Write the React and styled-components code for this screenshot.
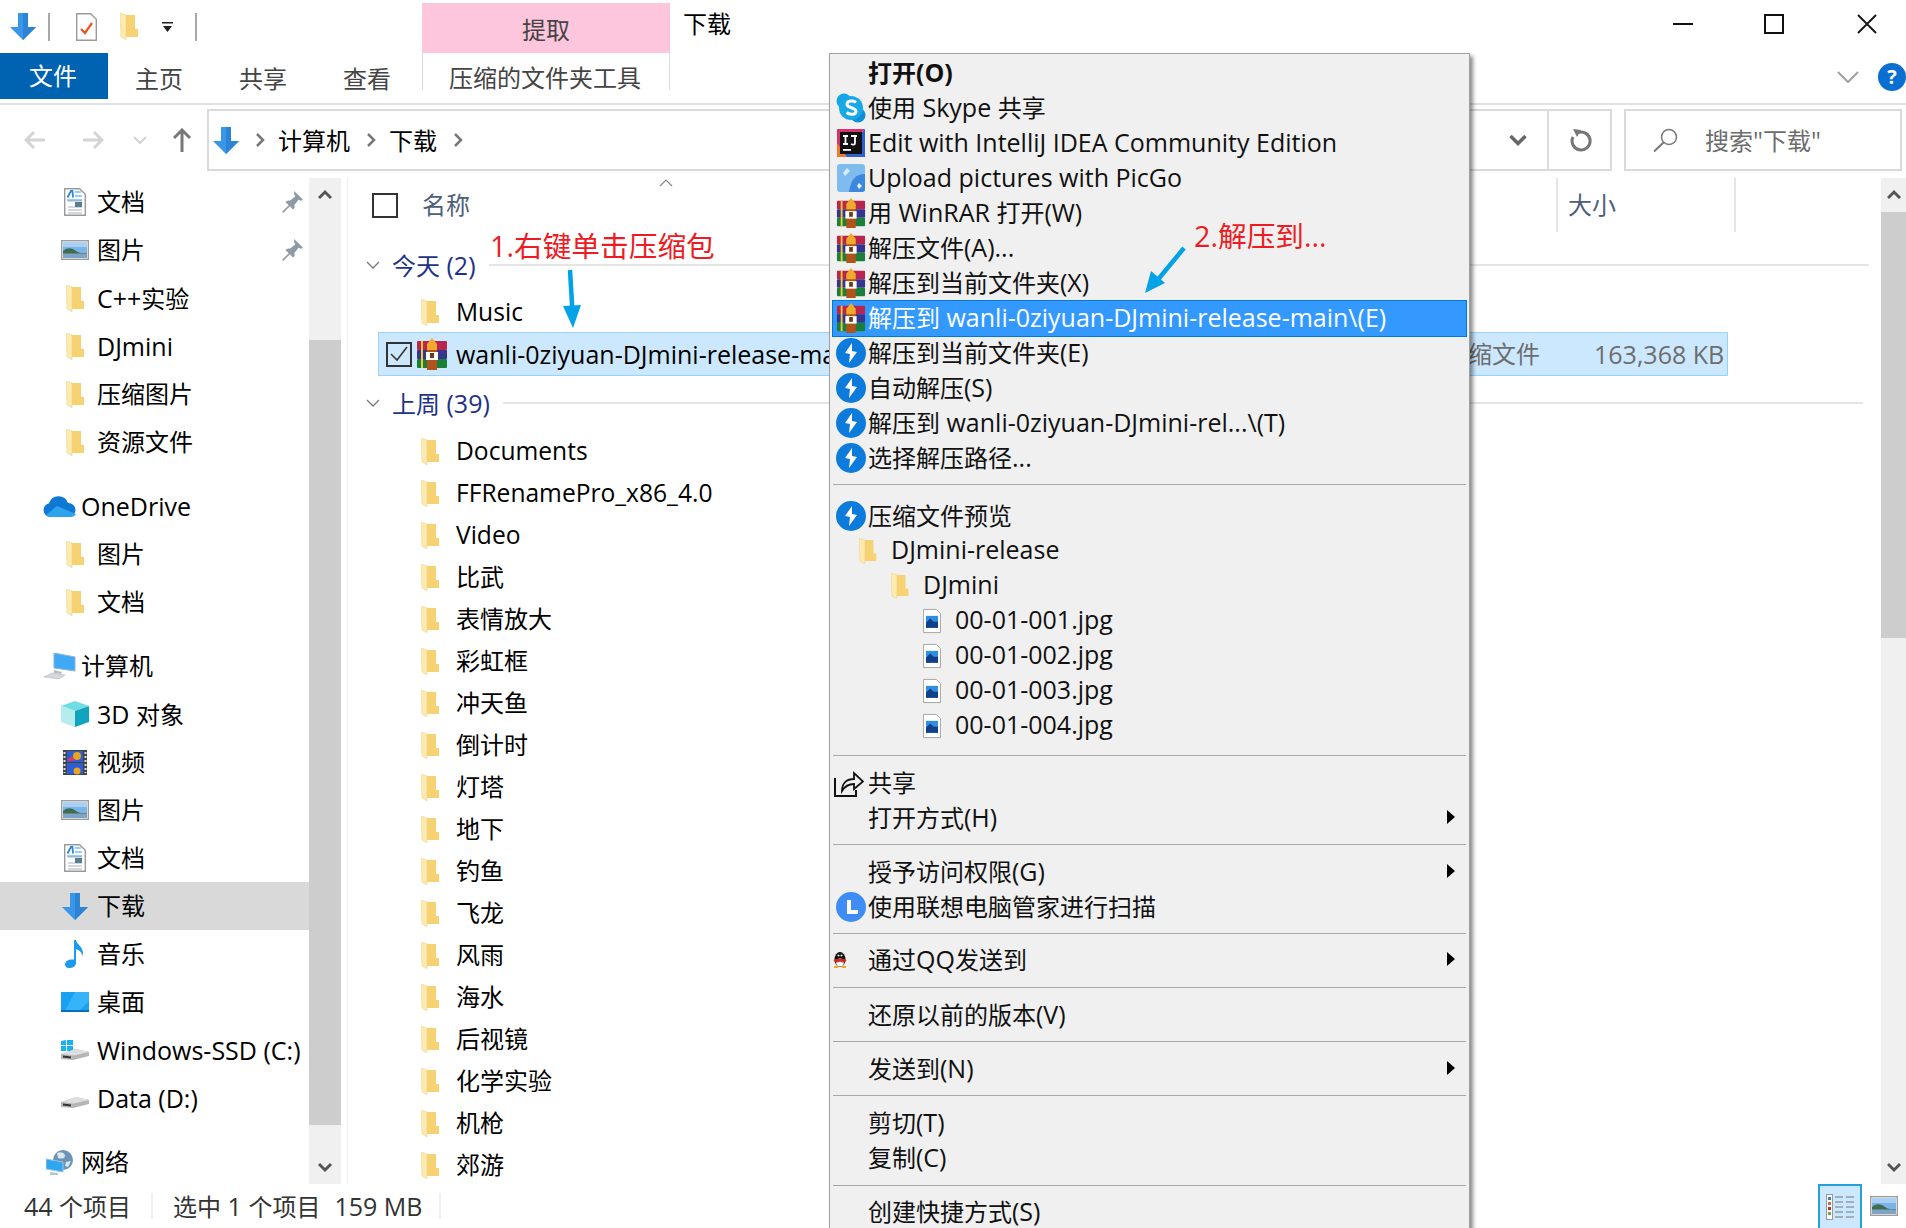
import React from "react";
import styled, { createGlobalStyle } from "styled-components";

const Global = createGlobalStyle`
	html, body { margin: 0; padding: 0; background: #fff; }
	body { font-family: "Open Sans", "Noto Sans CJK SC", sans-serif; font-size: 24px; color: #000; }
`;

const Page = styled.div`
	position: relative;
	width: 1906px;
	height: 1228px;
	overflow: hidden;
	display: flex;
	flex-direction: column;
	line-height: 1;
	white-space: nowrap;
`;

// latin runs are set a touch larger than the cjk around them, like Segoe next to YaHei
const Latin = styled.span`
	font-size: 25px;
`;
const Label = styled.span`
	display: inline-block;
`;

function T({ children }) {
	const parts = children.split(/([\x20-\x7e]+)/).filter(Boolean);
	return (
		<Label>
			{parts.map((part, i) => (/^[\x20-\x7e]/.test(part) ? <Latin key={i}>{part}</Latin> : part))}
		</Label>
	);
}

const TopRow = styled.div`
	height: 53px;
	display: flex;
	align-items: center;
	flex-shrink: 0;
`;
const QuickBar = styled.div`
	width: 422px;
	display: flex;
	align-items: center;
	padding-left: 10px;
	box-sizing: border-box;
`;
const QuickItem = styled.span`
	display: flex;
	margin-left: ${(p) => p.$ml || 0}px;
`;
const QuickSep = styled.span`
	width: 2px;
	height: 28px;
	background: #a8a8a8;
	margin-left: ${(p) => p.$ml}px;
`;
const ContextTab = styled.div`
	width: 248px;
	height: 50px;
	margin-top: 3px;
	background: #fec6dc;
	color: #444;
	display: flex;
	align-items: center;
	justify-content: center;
	padding-top: 4px;
	box-sizing: border-box;
`;
const WindowTitle = styled.div`
	margin-left: 13px;
	margin-top: -6px;
`;
const WindowButtons = styled.div`
	margin-left: auto;
	margin-top: -6px;
	padding-right: 29px;
	display: flex;
	gap: 72px;
	align-items: center;
	& > svg:nth-child(2) {
		margin-left: -1px;
		margin-right: 1px;
	}
`;

const TabRow = styled.div`
	height: 50px;
	display: flex;
	align-items: flex-start;
	border-bottom: 2px solid #e1e1e1;
	flex-shrink: 0;
	box-sizing: content-box;
`;
const FileTab = styled.div`
	width: 108px;
	height: 46px;
	padding-right: 2px;
	box-sizing: border-box;
	background: #0063b1;
	color: #fff;
	display: flex;
	align-items: center;
	justify-content: center;
`;
const Tab = styled.div`
	width: 104px;
	height: 46px;
	color: #444;
	display: flex;
	align-items: center;
	justify-content: center;
	padding: 6px 2px 0 0;
	box-sizing: border-box;
`;
const ToolTab = styled(Tab)`
	width: 248px;
	height: 37px;
	margin-left: 2px;
	padding-top: 13px;
	border-left: 1px solid #dadbdc;
	border-right: 1px solid #dadbdc;
`;
const RibbonRight = styled.div`
	margin-left: auto;
	display: flex;
	align-items: center;
	gap: 19px;
	padding-top: 10px;
`;
const HelpDot = styled.div`
	width: 28px;
	height: 28px;
	border-radius: 50%;
	background: #0a6fd1;
	color: #fff;
	font-size: 20px;
	font-weight: 700;
	display: flex;
	align-items: center;
	justify-content: center;
`;

const AddressRow = styled.div`
	height: 62px;
	margin-top: 4px;
	margin-bottom: 7px;
	display: flex;
	flex-shrink: 0;
`;
const NavButtons = styled.div`
	width: 207px;
	display: flex;
	align-items: center;
	padding-left: 24px;
	box-sizing: border-box;
`;
const NavButton = styled.span`
	display: flex;
	margin-left: ${(p) => p.$ml || 0}px;
`;
const AddressBox = styled.div`
	width: 1405px;
	border: 2px solid #dadada;
	box-sizing: border-box;
	display: flex;
	align-items: center;
	padding-left: 4px;
`;
const Crumb = styled.span`
	display: flex;
	margin: 0 11.5px 0 13.5px;
`;
const CrumbText = styled.span`
	padding-top: 2px;
`;
const AddressEnd = styled.div`
	margin-left: auto;
	display: flex;
	align-items: center;
	height: 100%;
`;
const AddressAction = styled.div`
	width: ${(p) => p.$w}px;
	height: 100%;
	display: flex;
	align-items: center;
	justify-content: center;
	border-left: ${(p) => (p.$line ? "2px solid #dadada" : "none")};
	box-sizing: border-box;
	padding-left: ${(p) => p.$pl || 0}px;
`;
const SearchBox = styled.div`
	width: 278px;
	margin-left: 12px;
	border: 2px solid #dadada;
	box-sizing: border-box;
	display: flex;
	align-items: center;
	padding-left: 27px;
	gap: 27px;
	color: #6d6d6d;
`;

const Main = styled.div`
	flex: 1;
	min-height: 0;
	display: flex;
`;
const NavPane = styled.div`
	width: 309px;
	flex-shrink: 0;
`;
const NavGroup = styled.div`
	margin-top: ${(p) => (p.$first ? 0 : 16)}px;
`;
const NavRow = styled.div`
	height: 48px;
	display: flex;
	align-items: center;
	padding-left: ${(p) => (p.$top ? 43 : 60)}px;
	gap: ${(p) => (p.$top ? 5 : 7)}px;
	background: ${(p) => (p.$active ? "#d9d9d9" : "transparent")};
`;
const NavIcon = styled.span`
	width: ${(p) => (p.$top ? 33 : 30)}px;
	display: flex;
	justify-content: center;
	flex-shrink: 0;
`;
const Pin = styled.span`
	margin-left: auto;
	padding-right: 6px;
	display: flex;
`;

const ScrollBar = styled.div`
	width: ${(p) => p.$w}px;
	flex-shrink: 0;
	background: #f0f0f0;
	display: flex;
	flex-direction: column;
`;
const ScrollEnd = styled.div`
	height: 34px;
	display: flex;
	align-items: center;
	justify-content: center;
	flex-shrink: 0;
`;
const ScrollTrack = styled.div`
	flex: 1;
`;
const ScrollThumb = styled.div`
	height: ${(p) => p.$h}px;
	margin-top: ${(p) => p.$top || 0}px;
	background: #cdcdcd;
`;

const ListPane = styled.div`
	flex: 1;
	min-width: 0;
	margin-left: 6px;
	border-left: 1px solid #efefef;
	position: relative;
	overflow: hidden;
`;
const ListHeader = styled.div`
	height: 54px;
	display: flex;
	align-items: center;
	padding-left: 24px;
	color: #4c607a;
`;
const HeaderBox = styled.span`
	width: 26px;
	height: 25px;
	border: 2px solid #333;
	box-sizing: border-box;
	margin-right: 24px;
`;
const SortCaret = styled.span`
	position: absolute;
	left: 311px;
	top: 0;
	display: flex;
`;
const HeaderCell = styled.div`
	height: 100%;
	display: flex;
	align-items: center;
	box-sizing: border-box;
	width: ${(p) => p.$w}px;
	padding-left: 10px;
	border-left: 2px solid #e5e5e5;
	border-right: 2px solid #e5e5e5;
	margin-left: ${(p) => p.$ml}px;
`;
const GroupRow = styled.div`
	height: 42px;
	margin-top: ${(p) => p.$mt}px;
	display: flex;
	align-items: center;
	padding-left: 18px;
	color: #1e3287;
`;
const GroupLabel = styled.span`
	margin-left: 12px;
	margin-right: 13px;
`;
const GroupLine = styled.span`
	width: ${(p) => p.$w}px;
	height: 2px;
	background: #e5e5e5;
`;
const FileRow = styled.div`
	height: 42px;
	display: flex;
	align-items: center;
	padding-left: 73px;
	gap: 17px;
	${Latin} {
		font-size: 24.6px;
	}
`;
const SelectedRow = styled.div`
	width: 1350px;
	height: 44px;
	margin: -1px 0 0 30px;
	background: #cce8ff;
	border: 1px solid #99d1ff;
	box-sizing: border-box;
	display: flex;
	align-items: center;
	padding-left: 7px;
`;
const CheckBox = styled.span`
	width: 26px;
	height: 25px;
	border: 2px solid #333;
	box-sizing: border-box;
	display: flex;
	align-items: center;
	justify-content: center;
	margin-right: 4px;
	flex-shrink: 0;
`;
const SelectedName = styled.span`
	width: 988px;
	margin-left: 8px;
	flex-shrink: 0;
`;
const SelectedType = styled.span`
	width: 150px;
	color: #6d6d6d;
	flex-shrink: 0;
`;
const SelectedSize = styled.span`
	color: #6d6d6d;
`;
const RowsGap = styled.div`
	height: ${(p) => p.$h}px;
`;

const StatusBar = styled.div`
	height: 44px;
	flex-shrink: 0;
	display: flex;
	align-items: center;
	padding-left: 24px;
	color: #333;
`;
const StatusSep = styled.span`
	width: 2px;
	height: 26px;
	background: #f0f0f0;
	margin: 0 ${(p) => p.$r}px 0 ${(p) => p.$l}px;
`;
const StatusText = styled.span`
	margin-left: ${(p) => p.$ml || 0}px;
`;
const ViewButtons = styled.div`
	margin-left: auto;
	height: 100%;
	display: flex;
	align-items: center;
	padding-right: 8px;
`;
const ViewActive = styled.div`
	width: 44px;
	height: 100%;
	background: #cce8ff;
	border: 2px solid #26a0da;
	border-bottom: none;
	box-sizing: border-box;
	display: flex;
	align-items: center;
	justify-content: center;
	margin-right: 8px;
`;

const Menu = styled.div`
	position: absolute;
	left: 829px;
	top: 53px;
	width: 641px;
	height: 1180px;
	background: #f0f0f0;
	border: 1px solid #a0a0a0;
	box-sizing: border-box;
	padding-top: 2px;
	box-shadow: 3px 3px 4px rgba(0, 0, 0, 0.45);
	color: #111;
`;
const MenuRow = styled.div`
	height: 35px;
	margin: 0 3px;
	padding-bottom: 2px;
	display: flex;
	align-items: center;
	box-sizing: border-box;
	font-weight: ${(p) => (p.$bold ? 700 : 400)};
	background: ${(p) => (p.$hot ? "#3399ff" : "transparent")};
	color: ${(p) => (p.$hot ? "#fff" : "inherit")};
	outline: ${(p) => (p.$hot ? "1px solid #0078d7" : "none")};
`;
const MenuIcon = styled.span`
	width: 35px;
	display: flex;
	justify-content: ${(p) => (p.$left ? "flex-start" : "center")};
	flex-shrink: 0;
`;
const TreeRow = styled(MenuRow)`
	padding-left: ${(p) => 26 + p.$depth * 32}px;
	padding-bottom: 4px;
	gap: 14px;
`;
const TreeIcon = styled.span`
	width: 18px;
	display: flex;
	justify-content: ${(p) => (p.$file ? "flex-start" : "center")};
	flex-shrink: 0;
	margin-top: 2px;
`;
const SubArrow = styled.span`
	margin-left: auto;
	margin-right: 11px;
	margin-top: -2px;
	width: 0;
	height: 0;
	border-left: 8px solid #000;
	border-top: 7px solid transparent;
	border-bottom: 7px solid transparent;
`;
const MenuSep = styled.div`
	height: 1px;
	margin: ${(p) => p.$top}px 3px ${(p) => p.$bottom}px;
	background: #a8a8a8;
`;

const Note = styled.div`
	position: absolute;
	left: ${(p) => p.$x}px;
	top: ${(p) => p.$y}px;
	color: #ed1c24;
	font-size: 28.7px;
	line-height: 34px;
`;
const NoteArrow = styled.svg`
	position: absolute;
	left: ${(p) => p.$x}px;
	top: ${(p) => p.$y}px;
`;

function DownArrow({ w = 26, h = 27 }) {
	return (
		<svg width={w} height={h} viewBox="0 0 26 27">
			<path d="M8 0h10v14h8L13 27 0 14h8z" fill="#3a96e6" />
			<path d="M13 0h5v14h8L13 27z" fill="#2b84d6" />
		</svg>
	);
}

function Folder({ h = 27 }) {
	return (
		<svg width={(h * 18) / 27} height={h} viewBox="0 0 18 27">
			<path d="M6 2h9v14h3v8H6z" fill="#f6d272" />
			<path d="M0 0l6 2v25l-5-3z" fill="#fdeab0" />
			<path d="M0 0l6 2v25l-5-3z" fill="none" stroke="#f1d58a" strokeWidth=".6" />
		</svg>
	);
}

function DocIcon() {
	return (
		<svg width="22" height="28" viewBox="0 0 22 28">
			<path d="M.7.7h15l5.6 5.6v21H.7z" fill="#fff" stroke="#9a9a9a" strokeWidth="1.4" />
			<path d="M4 13h14M4 19h14M4 22h14M4 25h14" stroke="#a9b4bf" strokeWidth="1.2" />
			<path d="M3.5 9.5L7 3h1.5l.5 6.5" fill="none" stroke="#2a86dd" strokeWidth="1.8" />
			<path d="M11 4h6M11 8h7M3 12h15" stroke="#3e97e2" strokeWidth="1.2" />
			<rect x="11" y="14" width="7" height="5" fill="#5a7f8c" />
		</svg>
	);
}

function PictureIcon() {
	return (
		<svg width="28" height="20" viewBox="0 0 28 20">
			<rect x=".7" y=".7" width="26.6" height="18.6" fill="#fff" stroke="#9c9c9c" strokeWidth="1.4" />
			<rect x="2" y="2" width="24" height="16" fill="#7bb2e8" />
			<path d="M2 2h24v5H2z" fill="#a9d0f2" />
			<path d="M2 11c5-4 9-3 13 0s7 2 11 2v1H2z" fill="#3f6d50" />
			<rect x="2" y="13.5" width="24" height="4.5" fill="#7fa3c4" />
		</svg>
	);
}

function WinRar({ size = 30 }) {
	return (
		<svg width={size} height={size} viewBox="0 0 32 32">
			<rect x="1" y="3" width="30" height="9" rx="1" fill="#b8254f" />
			<rect x="1" y="12" width="30" height="9" rx="1" fill="#35358f" />
			<rect x="1" y="21" width="30" height="9" rx="1" fill="#1a7f3a" />
			<rect x="5" y="3" width="2" height="27" fill="#f2c92e" />
			<rect x="11" y="6" width="10" height="26" fill="#b3531a" />
			<path d="M11 6l5-6 5 6v6H11z" fill="#f0a92b" />
			<rect x="10" y="14" width="12" height="8" fill="#fff" />
			<rect x="14" y="15" width="4" height="5" fill="#6b3b12" />
		</svg>
	);
}

function Bandizip() {
	return (
		<svg width="30" height="30" viewBox="0 0 30 30">
			<circle cx="15" cy="15" r="15" fill="#0d7bdb" />
			<path d="M16 5L9 15l5 1-1 9 8-11-5-1z" fill="#fff" />
		</svg>
	);
}

function SkypeIcon() {
	return (
		<svg width="30" height="30" viewBox="0 0 30 30">
			<circle cx="8" cy="8" r="7.5" fill="#12a5e8" />
			<circle cx="22" cy="22" r="7.5" fill="#0c8fd6" />
			<circle cx="15" cy="15" r="12" fill="#19a8e6" />
			<path d="M20 9.5c-2-2.200-9-2.400-9 1.800 0 4.400 9 2.600 9 7.200 0 3.600-6.600 3.400-9.400 1" fill="none" stroke="#fff" strokeWidth="3" />
		</svg>
	);
}

function IdeaIcon() {
	return (
		<svg width="28" height="28" viewBox="0 0 28 28">
			<path d="M0 0h28L0 28z" fill="#d6336c" />
			<path d="M28 0v28H0z" fill="#2f5fd0" />
			<path d="M0 14l10 14H0z" fill="#f07a2a" />
			<rect x="3" y="3" width="22" height="22" fill="#111" />
			<path d="M6 7h5M8.500 7v8M6 15h5M14 7h6M18 7v7c0 2-2 2-4 1" fill="none" stroke="#fff" strokeWidth="1.800" />
			<rect x="6" y="20" width="8" height="1.800" fill="#fff" />
		</svg>
	);
}

function PicGoIcon() {
	return (
		<svg width="28" height="28" viewBox="0 0 28 28">
			<rect width="28" height="28" rx="3" fill="#7ebcef" />
			<path d="M28 10c-9 0-14 5-16 18h13a3 3 0 003-3z" fill="#3d87dc" />
			<path d="M10 4l3 3-5 5-2-3z" fill="#d6ebfb" />
			<path d="M22 19l3 3-3 3-2-3z" fill="#e8f4fd" />
		</svg>
	);
}

function LenovoIcon() {
	return (
		<svg width="30" height="30" viewBox="0 0 30 30">
			<circle cx="15" cy="15" r="15" fill="#3e8cf5" />
			<path d="M11 8h4v10h7v4H11z" fill="#fff" />
		</svg>
	);
}

function QQIcon() {
	return (
		<svg width="14" height="17" viewBox="0 0 14 17">
			<ellipse cx="7" cy="8.500" rx="5.500" ry="7.500" fill="#111" />
			<ellipse cx="7" cy="11.500" rx="3.800" ry="4" fill="#fff" />
			<path d="M1.500 8h11l1 2-4 1.500-2.500-1-2.500 1-4-1.500z" fill="#d9261c" />
			<circle cx="5.500" cy="4.500" r="1" fill="#fff" />
			<circle cx="8.500" cy="4.500" r="1" fill="#fff" />
			<path d="M1 15h5l-1 2H1zM8 15h5v2H9z" fill="#f3a712" />
		</svg>
	);
}

function ShareIcon() {
	return (
		<svg width="30" height="28" viewBox="0 0 30 28" style={{ marginLeft: "-3px" }}>
			<path d="M1 9v18h21v-6" fill="none" stroke="#111" strokeWidth="2" />
			<path d="M8 22c0-8 5-12 12-12V4l9 8.500L20 20v-5c-5 0-9 2-12 7z" fill="none" stroke="#111" strokeWidth="1.800" />
		</svg>
	);
}

function ImageFile() {
	return (
		<svg width="21" height="28" viewBox="0 0 21 28">
			<path d="M.5.500h15l5 5v22H.5z" fill="#fff" stroke="#999" />
			<rect x="3.500" y="8" width="14" height="14" fill="#2f8fe0" />
			<path d="M3.500 22v-6l5-5 4 4 5 0v7z" fill="#123f8a" />
		</svg>
	);
}

function ComputerIcon() {
	return (
		<svg width="32" height="26" viewBox="0 0 32 26">
			<path d="M10 0l21 4v14L10 15z" fill="#3fa9f5" stroke="#8ab6d6" />
			<path d="M10 17l8 2-1 2-7-1z" fill="#b5bec6" />
			<path d="M0 24l8-4 13 2-6 4z" fill="#d5d8dc" stroke="#b4b9be" strokeWidth=".6" />
		</svg>
	);
}

function CloudIcon() {
	return (
		<svg width="33" height="21" viewBox="0 0 33 21">
			<path d="M7 21a7 7 0 01-1-13.800A10 10 0 0125 7a7 7 0 011 14z" fill="#0f78d4" />
			<path d="M3 19L14 10l19 8c-1 2-3 3-6 3H7a7 7 0 01-4-2z" fill="#2da4ec" />
		</svg>
	);
}

function CubeIcon() {
	return (
		<svg width="28" height="26" viewBox="0 0 28 26">
			<path d="M14 0l14 5-14 5L0 5z" fill="#6fdde3" />
			<path d="M0 5l14 5v16L0 21z" fill="#b7ecee" />
			<path d="M28 5L14 10v16l14-5z" fill="#12a3bf" />
		</svg>
	);
}

function FilmIcon() {
	return (
		<svg width="24" height="25" viewBox="0 0 24 25">
			<rect width="24" height="25" fill="#444" />
			<path d="M1.500 2v21M22.500 2v21" stroke="#ddd" strokeWidth="2" strokeDasharray="2 2" />
			<rect x="4" y="1" width="16" height="11" fill="#2a5dd6" />
			<rect x="4" y="13" width="16" height="11" fill="#2a5dd6" />
			<circle cx="14" cy="6" r="4" fill="#e9a51e" />
			<circle cx="14" cy="21" r="3.500" fill="#e9a51e" />
			<path d="M5 9l4-3 3 5H5z" fill="#d4386f" />
		</svg>
	);
}

function MusicIcon() {
	return (
		<svg width="20" height="28" viewBox="0 0 20 28">
			<path d="M9 0h2c.5 4 7 7 7 13 0 1-.5 2-1 3 0-4-3-6-6-7v14c0 3-3 5-7 5-3 0-4-2-4-3.500C0 21 4 19 9 19.500z" fill="#1a9bf0" />
		</svg>
	);
}

function DesktopIcon() {
	return (
		<svg width="28" height="20" viewBox="0 0 28 20">
			<rect width="28" height="20" fill="#1ba1f2" />
			<path d="M14 0h14v9L18 19H4z" fill="#36b4fa" />
			<rect y="18" width="28" height="2" fill="#0a6fb8" />
		</svg>
	);
}

function DriveIcon({ win }) {
	return (
		<svg width="28" height="20" viewBox="0 0 28 20">
			{win && <path d="M0 1l5-1v5H0zM6 0l6-1v6H6zM0 6h5v5H0zM6 6h6v6l-6-1z" fill="#15b4ee" />}
			<path d="M0 14l15-5 13 3v4L12 20 0 19z" fill="#b5b5b5" />
			<path d="M0 14l15-5 13 3-15 3.500z" fill="#dedede" />
			<path d="M2 15.500l8 1v2l-8-1z" fill="#333" />
		</svg>
	);
}

function NetworkIcon() {
	return (
		<svg width="28" height="25" viewBox="0 0 28 25">
			<circle cx="17" cy="10" r="10" fill="#6c93b8" />
			<path d="M11 3c4-2 8 0 8 3s-5 3-7 2zM20 12l5-1-3 6-3-1z" fill="#dce7ef" />
			<path d="M0 9l17 3v10L0 19z" fill="#2fa7ee" stroke="#9cc4de" />
			<path d="M4 22l8 1v2H4z" fill="#b8c4cc" />
		</svg>
	);
}

function PinIcon() {
	return (
		<svg width="22" height="23" viewBox="0 0 20 21">
			<path d="M12 0l8 8-2 1-2-1-4 5c1 2 0 3-1 4l-3-3-6 6-1-1 6-6-3-3c1-1 3-2 4-1l5-4-1-2z" fill="#8d9aa5" />
		</svg>
	);
}

function Chevron({ dir = "down", size = 14, color = "#555", width = 2 }) {
	const paths = {
		down: "M1 4l6 6 6-6",
		up: "M1 10l6-6 6 6",
		right: "M4 1l6 6-6 6",
	};
	return (
		<svg width={size} height={size} viewBox="0 0 14 14">
			<path d={paths[dir]} fill="none" stroke={color} strokeWidth={width} />
		</svg>
	);
}

function HArrow({ flip, color }) {
	return (
		<svg width="22" height="20" viewBox="0 0 22 20" style={flip ? { transform: "scaleX(-1)" } : undefined}>
			<path d="M1 10h19M12 2l8 8-8 8" fill="none" stroke={color} strokeWidth="3" />
		</svg>
	);
}

function UpArrow() {
	return (
		<svg width="18" height="24" viewBox="0 0 18 24">
			<path d="M9 24V3M1 10l8-8 8 8" fill="none" stroke="#777" strokeWidth="3" />
		</svg>
	);
}

const navGroups = [
	[
		{ name: "文档", icon: <DocIcon />, pin: true },
		{ name: "图片", icon: <PictureIcon />, pin: true },
		{ name: "C++实验", icon: <Folder /> },
		{ name: "DJmini", icon: <Folder /> },
		{ name: "压缩图片", icon: <Folder /> },
		{ name: "资源文件", icon: <Folder /> },
	],
	[
		{ name: "OneDrive", icon: <CloudIcon />, top: true },
		{ name: "图片", icon: <Folder /> },
		{ name: "文档", icon: <Folder /> },
	],
	[
		{ name: "计算机", icon: <ComputerIcon />, top: true },
		{ name: "3D 对象", icon: <CubeIcon /> },
		{ name: "视频", icon: <FilmIcon /> },
		{ name: "图片", icon: <PictureIcon /> },
		{ name: "文档", icon: <DocIcon /> },
		{ name: "下载", icon: <DownArrow />, active: true },
		{ name: "音乐", icon: <MusicIcon /> },
		{ name: "桌面", icon: <DesktopIcon /> },
		{ name: "Windows-SSD (C:)", icon: <DriveIcon win /> },
		{ name: "Data (D:)", icon: <DriveIcon /> },
	],
	[{ name: "网络", icon: <NetworkIcon />, top: true }],
];

const lastWeek = [
	"Documents", "FFRenamePro_x86_4.0", "Video", "比武", "表情放大", "彩虹框", "冲天鱼", "倒计时", "灯塔",
	"地下", "钓鱼", "飞龙", "风雨", "海水", "后视镜", "化学实验", "机枪", "郊游",
];

const menuTop = [
	{ text: "打开(O)", bold: true },
	{ text: "使用 Skype 共享", icon: <SkypeIcon /> },
	{ text: "Edit with IntelliJ IDEA Community Edition", icon: <IdeaIcon /> },
	{ text: "Upload pictures with PicGo", icon: <PicGoIcon /> },
	{ text: "用 WinRAR 打开(W)", icon: <WinRar /> },
	{ text: "解压文件(A)...", icon: <WinRar /> },
	{ text: "解压到当前文件夹(X)", icon: <WinRar /> },
	{ text: "解压到 wanli-0ziyuan-DJmini-release-main\\(E)", icon: <WinRar />, hot: true },
	{ text: "解压到当前文件夹(E)", icon: <Bandizip /> },
	{ text: "自动解压(S)", icon: <Bandizip /> },
	{ text: "解压到 wanli-0ziyuan-DJmini-rel...\\(T)", icon: <Bandizip /> },
	{ text: "选择解压路径...", icon: <Bandizip /> },
];

const previewFiles = ["00-01-001.jpg", "00-01-002.jpg", "00-01-003.jpg", "00-01-004.jpg"];

const menuBottom = [
	{ sep: [11, 10] },
	{ text: "共享", icon: <ShareIcon /> },
	{ text: "打开方式(H)", sub: true },
	{ sep: [8, 10] },
	{ text: "授予访问权限(G)", sub: true },
	{ text: "使用联想电脑管家进行扫描", icon: <LenovoIcon /> },
	{ sep: [8, 9] },
	{ text: "通过QQ发送到", icon: <QQIcon />, sub: true, left: true },
	{ sep: [9, 10] },
	{ text: "还原以前的版本(V)" },
	{ sep: [8, 10] },
	{ text: "发送到(N)", sub: true },
	{ sep: [8, 10] },
	{ text: "剪切(T)" },
	{ text: "复制(C)" },
	{ sep: [9, 9] },
	{ text: "创建快捷方式(S)" },
];

function MenuItem({ item }) {
	return (
		<MenuRow $bold={item.bold} $hot={item.hot}>
			<MenuIcon $left={item.left}>{item.icon}</MenuIcon>
			<T>{item.text}</T>
			{item.sub && <SubArrow />}
		</MenuRow>
	);
}

export default function App() {
	return (
		<Page>
			<Global />
			<TopRow>
				<QuickBar>
					<QuickItem><DownArrow /></QuickItem>
					<QuickSep $ml={12} />
					<QuickItem $ml={26}>
						<svg width="21" height="28" viewBox="0 0 21 28">
							<path d="M.7.7h14l5.600 5.600v21H.7z" fill="#fff" stroke="#9a9a9a" strokeWidth="1.400" />
							<path d="M5 16l4 4 7-10" fill="none" stroke="#e8551d" strokeWidth="2.200" />
						</svg>
					</QuickItem>
					<QuickItem $ml={23}><Folder /></QuickItem>
					<QuickItem $ml={24}>
						<svg width="11" height="10" viewBox="0 0 11 10">
							<path d="M0 0h11v1.500H0zM1 4h9L5.500 10z" fill="#222" />
						</svg>
					</QuickItem>
					<QuickSep $ml={22} />
				</QuickBar>
				<ContextTab>提取</ContextTab>
				<WindowTitle>下载</WindowTitle>
				<WindowButtons>
					<svg width="20" height="20" viewBox="0 0 20 20"><path d="M0 10h20" stroke="#111" strokeWidth="2" /></svg>
					<svg width="20" height="20" viewBox="0 0 20 20"><rect x="1" y="1" width="18" height="18" fill="none" stroke="#111" strokeWidth="2" /></svg>
					<svg width="20" height="20" viewBox="0 0 20 20"><path d="M1 1l18 18M19 1L1 19" stroke="#111" strokeWidth="1.800" /></svg>
				</WindowButtons>
			</TopRow>

			<TabRow>
				<FileTab>文件</FileTab>
				<Tab>主页</Tab>
				<Tab>共享</Tab>
				<Tab>查看</Tab>
				<ToolTab>压缩的文件夹工具</ToolTab>
				<RibbonRight>
					<svg width="22" height="12" viewBox="0 0 22 12"><path d="M1 1l10 10L21 1" fill="none" stroke="#a0a0a0" strokeWidth="2" /></svg>
					<HelpDot>?</HelpDot>
				</RibbonRight>
			</TabRow>

			<AddressRow>
				<NavButtons>
					<NavButton><HArrow flip color="#d4d4d4" /></NavButton>
					<NavButton $ml={36}><HArrow color="#d4d4d4" /></NavButton>
					<NavButton $ml={29}><Chevron color="#d4d4d4" /></NavButton>
					<NavButton $ml={26}><UpArrow /></NavButton>
				</NavButtons>
				<AddressBox>
					<DownArrow />
					<Crumb><Chevron dir="right" size={14} color="#777" width={2.5} /></Crumb>
					<CrumbText>计算机</CrumbText>
					<Crumb><Chevron dir="right" size={14} color="#777" width={2.5} /></Crumb>
					<CrumbText>下载</CrumbText>
					<Crumb><Chevron dir="right" size={14} color="#777" width={2.5} /></Crumb>
					<AddressEnd>
						<AddressAction $w={63} $pl={4}>
							<svg width="18" height="12" viewBox="0 0 18 12"><path d="M1.500 2L9 9.500 16.500 2" fill="none" stroke="#666" strokeWidth="3.500" /></svg>
						</AddressAction>
						<AddressAction $w={63} $line $pl={2}>
							<svg width="22" height="24" viewBox="0 0 22 24"><path d="M8 4.500A9 9 0 1 1 3 9" fill="none" stroke="#777" strokeWidth="3" /><path d="M3 1l8 1-4 7z" fill="#777" /></svg>
						</AddressAction>
					</AddressEnd>
				</AddressBox>
				<SearchBox>
					<svg width="25" height="24" viewBox="0 0 25 24"><circle cx="16" cy="9" r="7.500" fill="none" stroke="#777" strokeWidth="1.500" /><path d="M10.500 14.500L1 23.500" stroke="#777" strokeWidth="2" /></svg>
					<T>{'搜索"下载"'}</T>
				</SearchBox>
			</AddressRow>

			<Main>
				<NavPane>
					{navGroups.map((group, i) => (
						<NavGroup key={i} $first={i === 0}>
							{group.map((row) => (
								<NavRow key={row.name} $top={row.top} $active={row.active}>
									<NavIcon $top={row.top}>{row.icon}</NavIcon>
									<T>{row.name}</T>
									{row.pin && <Pin><PinIcon /></Pin>}
								</NavRow>
							))}
						</NavGroup>
					))}
				</NavPane>
				<ScrollBar $w={32}>
					<ScrollEnd><Chevron dir="up" size={14} color="#555" width={3} /></ScrollEnd>
					<ScrollThumb $h={785} $top={128} />
					<ScrollTrack />
					<ScrollEnd><Chevron size={14} color="#555" width={3} /></ScrollEnd>
				</ScrollBar>
				<ListPane>
					<ListHeader>
						<HeaderBox />
						名称
						<SortCaret>
							<svg width="14" height="9" viewBox="0 0 14 9"><path d="M1 8l6-6 6 6" fill="none" stroke="#888" strokeWidth="1.200" /></svg>
						</SortCaret>
						<HeaderCell $w={180} $ml={1086}>大小</HeaderCell>
					</ListHeader>
					<GroupRow $mt={12}>
						<Chevron color="#777" width={1.300} />
						<GroupLabel><T>今天 (2)</T></GroupLabel>
						<GroupLine $w={1380} />
					</GroupRow>
					<RowsGap $h={5} />
					<FileRow><Folder /><T>Music</T></FileRow>
					<SelectedRow>
						<CheckBox>
							<svg width="18" height="16" viewBox="0 0 18 16"><path d="M1 8l6 6L17 1" fill="none" stroke="#333" strokeWidth="1.500" /></svg>
						</CheckBox>
						<WinRar size={32} />
						<SelectedName><T>wanli-0ziyuan-DJmini-release-main.zip</T></SelectedName>
						<SelectedType>压缩文件</SelectedType>
						<SelectedSize><T>163,368 KB</T></SelectedSize>
					</SelectedRow>
					<GroupRow $mt={6}>
						<Chevron color="#777" width={1.300} />
						<GroupLabel><T>上周 (39)</T></GroupLabel>
						<GroupLine $w={1360} />
					</GroupRow>
					<RowsGap $h={6} />
					{lastWeek.map((name) => (
						<FileRow key={name}><Folder /><T>{name}</T></FileRow>
					))}
				</ListPane>
				<ScrollBar $w={25}>
					<ScrollEnd><Chevron dir="up" size={14} color="#555" width={3} /></ScrollEnd>
					<ScrollThumb $h={426} />
					<ScrollTrack />
					<ScrollEnd><Chevron size={14} color="#555" width={3} /></ScrollEnd>
				</ScrollBar>
			</Main>

			<StatusBar>
				<StatusText><T>44 个项目</T></StatusText>
				<StatusSep $l={20} $r={20} />
				<StatusText><T>选中 1 个项目</T></StatusText>
				<StatusText $ml={14}><T>159 MB</T></StatusText>
				<StatusSep $l={17} $r={0} />
				<ViewButtons>
					<ViewActive>
						<svg width="28" height="26" viewBox="0 0 28 26">
							<rect x=".5" y=".5" width="6" height="25" fill="#fff" stroke="#999" />
							<path d="M2 3h3v3H2z" fill="#4a7ca8" /><path d="M2 8h3v3H2z" fill="#c4763a" /><path d="M2 13h3v3H2z" fill="#c92a2a" /><path d="M2 18h3v3H2z" fill="#7fa34a" />
							<path d="M9 3h8M20 3h8M9 8h8M20 8h8M9 13h8M20 13h8M9 18h8M20 18h8M9 23h8M20 23h8" stroke="#777" strokeWidth="1.200" />
						</svg>
					</ViewActive>
					<PictureIcon />
				</ViewButtons>
			</StatusBar>

			<Menu>
				{menuTop.map((item) => (
					<MenuItem key={item.text} item={item} />
				))}
				<MenuSep $top={8} $bottom={14} />
				<MenuItem item={{ text: "压缩文件预览", icon: <Bandizip /> }} />
				<TreeRow $depth={0}><TreeIcon><Folder h={26} /></TreeIcon><T>DJmini-release</T></TreeRow>
				<TreeRow $depth={1}><TreeIcon><Folder h={26} /></TreeIcon><T>DJmini</T></TreeRow>
				{previewFiles.map((name) => (
					<TreeRow key={name} $depth={2}><TreeIcon $file><ImageFile /></TreeIcon><T>{name}</T></TreeRow>
				))}
				{menuBottom.map((item, i) =>
					item.sep ? <MenuSep key={i} $top={item.sep[0]} $bottom={item.sep[1]} /> : <MenuItem key={i} item={item} />
				)}
			</Menu>

			<Note $x={490} $y={229}>1.右键单击压缩包</Note>
			<Note $x={1194} $y={219}>2.解压到...</Note>
			<NoteArrow $x={559} $y={268} width="26" height="62" viewBox="0 0 26 62">
				<path d="M11 2l2.500 42" stroke="#00a2e8" strokeWidth="4.500" fill="none" />
				<path d="M4 38l18-1-8 23z" fill="#00a2e8" />
			</NoteArrow>
			<NoteArrow $x={1142} $y={244} width="46" height="52" viewBox="0 0 46 52">
				<path d="M42 4L14 38" stroke="#00a2e8" strokeWidth="4.500" fill="none" />
				<path d="M3 49l6-22 14 12z" fill="#00a2e8" />
			</NoteArrow>
		</Page>
	);
}
